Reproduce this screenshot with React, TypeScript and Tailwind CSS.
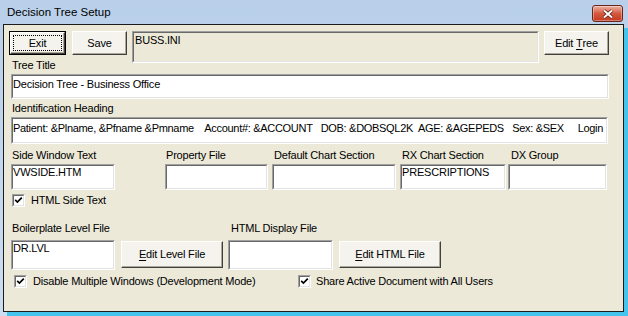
import { ReactNode } from 'react';

interface BoxProps {
  children?: ReactNode;
  className?: string;
  innerClassName?: string;
}

// classic 3D raised button
function Button({ children, className = '' }: BoxProps) {
  return (
    <div
      className={`border border-t-white border-l-white border-r-[#404040] border-b-[#404040] bg-[#f4f3ee] shadow-[inset_-1px_-1px_0_#aca899] flex items-center justify-center ${className}`}
    >
      {children}
    </div>
  );
}

// sunken edit box
function Field({ children, className = '', innerClassName = 'bg-white' }: BoxProps) {
  return (
    <div
      className={`border border-t-[#a0a0a0] border-l-[#a0a0a0] border-r-white border-b-white ${className}`}
    >
      <div
        className={`h-full w-full border border-t-[#696969] border-l-[#696969] border-r-[#e3e3e3] border-b-[#e3e3e3] leading-[12px] whitespace-pre overflow-hidden ${innerClassName}`}
      >
        {children}
      </div>
    </div>
  );
}

function Check() {
  return (
    <div className="w-[13px] h-[13px] shrink-0 border border-t-[#a0a0a0] border-l-[#a0a0a0] border-r-white border-b-white">
      <div className="h-full w-full bg-white border border-t-[#696969] border-l-[#696969] border-r-[#e3e3e3] border-b-[#e3e3e3] flex items-center justify-center">
        <svg width="9" height="9" viewBox="0 0 9 9">
          <path d="M1.2 3.8 L3.4 6 L7.8 1.6" stroke="black" strokeWidth="1.7" fill="none" />
        </svg>
      </div>
    </div>
  );
}

function Label({ children, className = '' }: BoxProps) {
  return <div className={`leading-[13px] pl-[1px] whitespace-nowrap ${className}`}>{children}</div>;
}

export default function App() {
  return (
    <div className="w-[628px] h-[316px] bg-linear-to-b from-[#b9d0ea] to-[#cbddf1] flex flex-col font-['Liberation_Sans',Arial,sans-serif] text-[11px] tracking-[-0.2px] text-black overflow-hidden">
      {/* title bar */}
      <div className="h-[24px] shrink-0 flex items-start pl-[7px] pr-[5px]">
        <div className="mt-[5px] text-[11.5px] tracking-normal leading-[14px]">Decision Tree Setup</div>
        <div className="ml-auto mt-[5px] w-[31px] h-[17px] rounded-[3px] border border-[#6b2419] bg-linear-to-b from-[#eab2a4] via-[#d5583f] to-[#c23a20] shadow-[inset_0_0_0_1px_rgba(255,255,255,0.35)] flex items-center justify-center">
          <svg width="12" height="10" viewBox="0 0 12 10">
            <path d="M2 1.5 L10 8.5 M10 1.5 L2 8.5" stroke="#5b1a10" strokeWidth="3.4" />
            <path d="M2 1.5 L10 8.5 M10 1.5 L2 8.5" stroke="white" strokeWidth="1.9" />
          </svg>
        </div>
      </div>

      {/* client area */}
      <div className="flex-1 ml-[3px] mr-[4px] mb-[4px] border border-[#1c1c1c] bg-[#ece9d8] shadow-[4px_4px_0_#45c5ee]">
        <div className="flex flex-col pl-[7px]">
          <div className="flex items-start mt-[6px] -ml-[2px]">
            <div className="relative w-[57px] h-[24px] border border-black">
              <Button className="h-full w-full">Exit</Button>
              <div className="absolute inset-[3px] border border-dotted border-black" />
            </div>
            <Button className="ml-[6px] w-[55px] h-[24px]">Save</Button>
            <Field className="ml-[5px] w-[407px] h-[32px]" innerClassName="bg-[#ece9d8] pl-[1px] pt-[1px]">
              BUSS.INI
            </Field>
            <Button className="ml-[5px] w-[65px] h-[24px]">
              Edit&nbsp;<span className="underline underline-offset-2">T</span>ree
            </Button>
          </div>

          <Label className="-mt-[4px]">Tree Title</Label>
          <Field className="mt-[2px] w-[598px] h-[25px]" innerClassName="bg-white pt-[2px]">
            Decision Tree - Business Office
          </Field>

          <Label className="mt-[3px]">Identification Heading</Label>
          <Field className="mt-[2px] w-[597px] h-[27px]" innerClassName="bg-white pt-[3px] tracking-[-0.3px]">
            {'Patient: &Plname, &Pfname &Pmname    Account#: &ACCOUNT   DOB: &DOBSQL2K  AGE: &AGEPEDS   Sex: &SEX     Login'}
          </Field>

          <div className="flex mt-[5px]">
            <div className="w-[104px]">
              <Label>Side Window Text</Label>
              <Field className="mt-[2px] h-[26px]" innerClassName="bg-white">VWSIDE.HTM</Field>
            </div>
            <div className="ml-[50px] w-[103px]">
              <Label>Property File</Label>
              <Field className="mt-[2px] h-[26px]" />
            </div>
            <div className="ml-[4px] w-[124px]">
              <Label className="pl-[2px]">Default Chart Section</Label>
              <Field className="mt-[2px] h-[26px]" />
            </div>
            <div className="ml-[4px] w-[106px]">
              <Label className="pl-[2px]">RX Chart Section</Label>
              <Field className="mt-[2px] h-[26px]" innerClassName="bg-white">PRESCRIPTIONS</Field>
            </div>
            <div className="ml-[2px] w-[99px]">
              <Label className="pl-[3px]">DX Group</Label>
              <Field className="mt-[2px] h-[26px]" />
            </div>
          </div>

          <div className="flex items-center mt-[4px] ml-[1px]">
            <Check />
            <span className="ml-[6px] leading-[13px]">HTML Side Text</span>
          </div>

          <div className="flex mt-[15px]">
            <Label className="w-[219px]">Boilerplate Level File</Label>
            <Label>HTML Display File</Label>
          </div>

          <div className="flex items-start mt-[5px]">
            <Field className="w-[104px] h-[30px]" innerClassName="bg-white">DR.LVL</Field>
            <Button className="ml-[6px] mt-[1px] w-[102px] h-[27px]">
              <span className="underline underline-offset-2">E</span>dit Level File
            </Button>
            <Field className="ml-[5px] w-[105px] h-[30px]" />
            <Button className="ml-[6px] mt-[1px] w-[102px] h-[27px]">
              <span className="underline underline-offset-2">E</span>dit HTML File
            </Button>
          </div>

          <div className="flex items-center mt-[5px] ml-[3px]">
            <div className="flex items-center w-[284px]">
              <Check />
              <span className="ml-[6px] leading-[13px]">Disable Multiple Windows (Development Mode)</span>
            </div>
            <Check />
            <span className="ml-[5px] leading-[13px]">Share Active Document with All Users</span>
          </div>
        </div>
      </div>
    </div>
  );
}
